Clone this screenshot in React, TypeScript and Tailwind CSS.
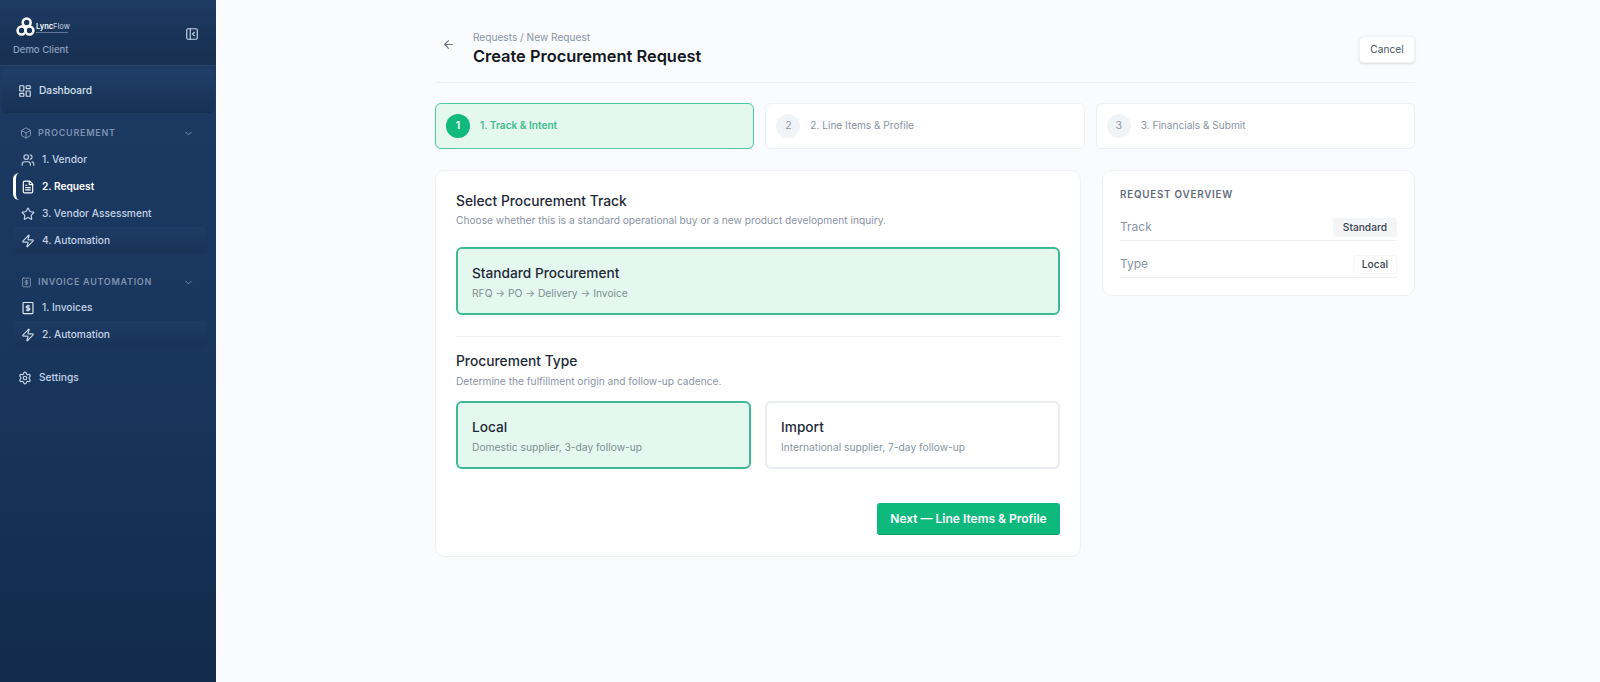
import React from "react";
import { ArrowLeft, Box, ChevronDown, FileText, LayoutDashboard, PanelLeftClose, Settings, Star, Users, Zap } from "lucide-react";

const font = { fontFamily: "Inter, 'Noto Sans', sans-serif" };

function DollarSquare({ className }: { className?: string }) {
  return (
    <svg viewBox="0 0 24 24" className={className} fill="none" stroke="currentColor" strokeWidth={2} strokeLinecap="round" strokeLinejoin="round">
      <rect x="3.5" y="2.5" width="17" height="19" rx="1.5" />
      <path d="M15 8.5h-4.5a1.75 1.75 0 0 0 0 3.5h3a1.75 1.75 0 0 1 0 3.5H9" />
      <path d="M12 7v10" />
    </svg>
  );
}

function Logo() {
  return (
    <svg viewBox="0 0 24 24" className="w-[19px] h-[19px] shrink-0" fill="none" stroke="white" strokeWidth={3.2}>
      <circle cx="13.5" cy="7" r="5" />
      <circle cx="7" cy="17" r="5" />
      <circle cx="17" cy="17" r="5" />
    </svg>
  );
}

function SubItem({ icon, label, active, band }: { icon: React.ReactNode; label: string; active?: boolean; band?: boolean }) {
  return (
    <div className="relative h-[27px] flex items-center pl-[20px] pr-2">
      {band && <span className="absolute left-[14px] right-[10px] inset-y-0 rounded bg-gradient-to-b from-[#1f3d68]/70 to-[#173153]/60" />}
      {active && <span className="absolute left-[13px] top-[0px] w-[6px] h-[27px] rounded-l-[6px] border-l-[3px] border-white" />}
      <span className={`relative w-[16px] flex justify-center ${active ? "text-white" : "text-[#c5d3e6]"}`}>{icon}</span>
      <span className={`relative ml-[6px] text-[10.2px] ${active ? "font-semibold text-white" : "font-medium text-[#c5d3e6]"}`}>{label}</span>
    </div>
  );
}

function Section({ icon, label }: { icon: React.ReactNode; label: string }) {
  return (
    <div className="h-[20px] flex items-center pl-[19px] pr-[22px] text-[#7f93b0]">
      <span className="w-[14px] flex justify-center">{icon}</span>
      <span className="ml-[5px] text-[9px] font-semibold tracking-[0.08em] flex-1">{label}</span>
      <ChevronDown className="w-[11px] h-[11px]" />
    </div>
  );
}

function Sidebar() {
  return (
    <aside className="w-[216px] shrink-0 h-[682px] bg-gradient-to-b from-[#1c3a63] via-[#19365d] to-[#122b4c] flex flex-col">
      <div className="h-[66px] shrink-0 pl-[13px] pr-[18px] pt-[17px] border-b border-[#2a466e] bg-gradient-to-b from-[#1d3a62] to-[#172f50] relative">
        <div className="flex items-center gap-[1px] h-[19px] ml-[3px]">
          <Logo />
          <div className="flex flex-col leading-none mt-[3px]">
            <span className="text-[7.5px] font-semibold text-white">Lync<span className="font-normal text-[#c5d3e6]">Flow</span></span>
            <span className="block mt-[1px] h-[1px] w-[32px] bg-[#a9bad2]/50" />
          </div>
        </div>
        <div className="mt-[7px] text-[9.5px] leading-[14px] text-[#8da2bf] font-medium">Demo Client</div>
        <PanelLeftClose className="absolute right-[17px] top-[27px] w-[14px] h-[14px] text-[#c5d3e6]" />
      </div>
      <div className="h-[44px] mt-[3px] mx-[2px] flex items-center pl-[16px] rounded bg-gradient-to-b from-[#1f3e69] to-[#173153] text-[#d6e0ee]">
        <LayoutDashboard className="w-[14px] h-[14px]" />
        <span className="ml-[7px] text-[10.2px] font-medium">Dashboard</span>
      </div>
      <div className="mt-[10px]">
        <Section icon={<Box className="w-[12px] h-[12px]" />} label="PROCUREMENT" />
        <div className="mt-[3px]">
          <SubItem icon={<Users className="w-[14px] h-[14px]" />} label="1. Vendor" />
          <SubItem icon={<FileText className="w-[14px] h-[14px]" />} label="2. Request" active />
          <SubItem icon={<Star className="w-[14px] h-[14px]" />} label="3. Vendor Assessment" />
          <SubItem icon={<Zap className="w-[14px] h-[14px]" />} label="4. Automation" band />
        </div>
      </div>
      <div className="mt-[18px]">
        <Section icon={<DollarSquare className="w-[11px] h-[11px]" />} label="INVOICE AUTOMATION" />
        <div className="mt-[2px]">
          <SubItem icon={<DollarSquare className="w-[14px] h-[14px] text-[#e3eaf4]" />} label="1. Invoices" />
          <SubItem icon={<Zap className="w-[14px] h-[14px]" />} label="2. Automation" band />
        </div>
      </div>
      <div className="mt-[14px] h-[32px] flex items-center pl-[18px] text-[#c5d3e6]">
        <Settings className="w-[14px] h-[14px]" />
        <span className="ml-[7px] text-[10.2px] font-medium">Settings</span>
      </div>
    </aside>
  );
}

function Step({ n, label, active }: { n: number; label: string; active?: boolean }) {
  return (
    <div className={`flex-1 h-[46px] rounded-[6px] border flex items-center pl-[10px] ${active ? "bg-[#e4f8f0] border-[#4fc89c]" : "bg-white border-[#edf0f4]"}`}>
      <span className={`w-[24px] h-[24px] rounded-full flex items-center justify-center text-[10.5px] ${active ? "bg-[#10b97c] text-white font-semibold" : "bg-[#f1f4f7] text-[#8a94a3]"}`}>{n}</span>
      <span className={`ml-[10px] text-[10.1px] ${active ? "text-[#3dbd8c] font-semibold" : "text-[#8a94a3]"}`}>{n}. {label}</span>
    </div>
  );
}

function Choice({ title, sub, active, className }: { title: string; sub: string; active?: boolean; className?: string }) {
  return (
    <div className={`h-[68px] rounded-[6px] border-2 flex flex-col justify-center pl-[14px] pt-[1px] ${active ? "bg-[#e4f8f0] border-[#3fb993]" : "bg-white border-[#e9ecf0]"} ${className ?? ""}`}>
      <div className="text-[13.7px] font-medium text-[#1f2937] leading-[18px]">{title}</div>
      <div className={`mt-[4px] text-[10.25px] leading-[14px] ${active ? "text-[#7d8f92]" : "text-[#8a94a3]"}`}>{sub}</div>
    </div>
  );
}

export default function App() {
  return (
    <div className="flex w-[1600px] h-[682px] overflow-hidden bg-[#f9fbfc]" style={font}>
      <Sidebar />
      <main className="flex-1 pl-[219px]">
        <div className="w-[980px]">
          <header className="h-[83px] border-b border-[#eceff3] flex items-start pt-[30px]">
            <ArrowLeft className="w-[13px] h-[13px] ml-[7px] mt-[8px] text-[#6b7280]" />
            <div className="ml-[18px] flex-1">
              <div className="text-[10.15px] leading-[14px] text-[#8a94a3]">Requests / New Request</div>
              <h1 className="text-[16.4px] leading-[24px] font-semibold text-[#14181f]">Create Procurement Request</h1>
            </div>
            <button className="w-[56px] h-[27px] mt-[6px] rounded-[4px] bg-white border border-[#f0f2f5] shadow-sm text-[10.2px] font-normal text-[#4b5563]">Cancel</button>
          </header>
          <div className="mt-[20px] flex gap-[11px]">
            <Step n={1} label="Track & Intent" active />
            <Step n={2} label="Line Items & Profile" />
            <Step n={3} label="Financials & Submit" />
          </div>
          <div className="mt-[21px] flex gap-[21px] items-start">
            <section className="w-[646px] h-[387px] rounded-[10px] bg-white border border-[#eef0f4] px-[20px] pt-[21px]">
              <h2 className="text-[13.8px] leading-[18px] font-medium text-[#1f2937]">Select Procurement Track</h2>
              <p className="mt-[3px] text-[10.2px] leading-[14px] text-[#8a94a3]">Choose whether this is a standard operational buy or a new product development inquiry.</p>
              <Choice className="mt-[20px]" title="Standard Procurement" sub="RFQ → PO → Delivery → Invoice" active />
              <div className="mt-[21px] border-t border-[#eef0f4]" />
              <h2 className="mt-[15px] text-[13.8px] leading-[18px] font-medium text-[#1f2937]">Procurement Type</h2>
              <p className="mt-[4px] text-[10.2px] leading-[14px] text-[#8a94a3]">Determine the fulfillment origin and follow-up cadence.</p>
              <div className="mt-[13px] flex gap-[14px]">
                <Choice className="flex-1" title="Local" sub="Domestic supplier, 3-day follow-up" active />
                <Choice className="flex-1" title="Import" sub="International supplier, 7-day follow-up" />
              </div>
              <div className="mt-[34px] flex justify-end">
                <button className="w-[183px] h-[32px] rounded-[3px] bg-[#0db97c] border-b border-[#0a9c68] text-white text-[12px] font-semibold">Next — Line Items &amp; Profile</button>
              </div>
            </section>
            <aside className="flex-1 h-[126px] rounded-[10px] bg-white border border-[#eef0f4] px-[17px] pt-[17px]">
              <div className="text-[9.8px] leading-[14px] font-semibold tracking-[0.08em] text-[#5f6b7a]">REQUEST OVERVIEW</div>
              <div className="mt-[12px] h-[27px] flex items-center justify-between border-b border-[#edf0f3]">
                <span className="text-[12px] text-[#8a94a3]">Track</span>
                <span className="h-[19px] px-[10px] rounded-[3px] bg-[#f3f5f7] text-[10.2px] font-medium leading-[19px] text-[#374151]">Standard</span>
              </div>
              <div className="mt-[10px] h-[27px] flex items-center justify-between border-b border-[#edf0f3]">
                <span className="text-[12px] text-[#8a94a3]">Type</span>
                <span className="h-[19px] px-[8px] rounded-[3px] bg-white border border-[#f6f7f9] text-[10.2px] font-medium leading-[17px] text-[#374151]">Local</span>
              </div>
            </aside>
          </div>
        </div>
      </main>
    </div>
  );
}
